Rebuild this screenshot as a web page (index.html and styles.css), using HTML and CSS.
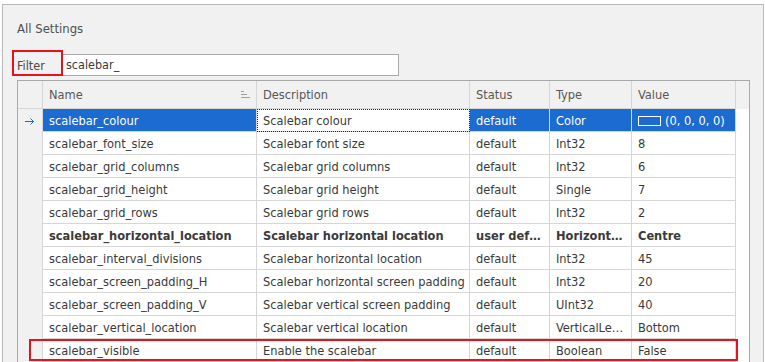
FILE: index.html
```html
<!DOCTYPE html>
<html lang="en-US">
<head>
<meta charset="UTF-8" />
<title>All Settings</title>
<link rel="stylesheet" href="styles.css">
</head>
<body>
    <div class="panel">
        <div class="title">All Settings</div>
        <div class="filter">
            <label class="filter-label">Filter</label>
            <div class="filter-input">scalebar_</div>
            <span class="mark mark--filter"></span>
        </div>
        <div class="grid">
            <div class="row row--head">
                <div class="cell cell--ind"></div>
                <div class="cell">Name
                    <svg class="sort" width="9" height="7" viewBox="0 0 9 7">
                        <rect x="0" y="0" width="3" height="1" fill="#a0a0a0"></rect>
                        <rect x="0" y="3" width="6" height="1" fill="#a0a0a0"></rect>
                        <rect x="0" y="6" width="9" height="1" fill="#a0a0a0"></rect>
                    </svg>
                </div>
                <div class="cell">Description</div>
                <div class="cell">Status</div>
                <div class="cell">Type</div>
                <div class="cell">Value</div>
                <div class="cell cell--fill"></div>
            </div>

            <div class="row row--selected">
                <div class="cell cell--ind">
                    <svg width="10" height="8" viewBox="0 0 10 8">
                        <path d="M0 4.5H8.5M5.5 1.5L8.5 4.5L5.5 7.5" fill="none" stroke="#1c6bd0" stroke-width="1"></path>
                    </svg>
                </div>
                <div class="cell">scalebar_colour</div>
                <div class="cell cell--focus">Scalebar colour</div>
                <div class="cell">default</div>
                <div class="cell">Color</div>
                <div class="cell"><span class="swatch"></span>(0, 0, 0, 0)</div>
                <div class="cell cell--fill"></div>
            </div>
            <div class="row">
                <div class="cell cell--ind"></div>
                <div class="cell">scalebar_font_size</div>
                <div class="cell">Scalebar font size</div>
                <div class="cell">default</div>
                <div class="cell">Int32</div>
                <div class="cell">8</div>
                <div class="cell cell--fill"></div>
            </div>
            <div class="row">
                <div class="cell cell--ind"></div>
                <div class="cell">scalebar_grid_columns</div>
                <div class="cell">Scalebar grid columns</div>
                <div class="cell">default</div>
                <div class="cell">Int32</div>
                <div class="cell">6</div>
                <div class="cell cell--fill"></div>
            </div>
            <div class="row">
                <div class="cell cell--ind"></div>
                <div class="cell">scalebar_grid_height</div>
                <div class="cell">Scalebar grid height</div>
                <div class="cell">default</div>
                <div class="cell">Single</div>
                <div class="cell">7</div>
                <div class="cell cell--fill"></div>
            </div>
            <div class="row">
                <div class="cell cell--ind"></div>
                <div class="cell">scalebar_grid_rows</div>
                <div class="cell">Scalebar grid rows</div>
                <div class="cell">default</div>
                <div class="cell">Int32</div>
                <div class="cell">2</div>
                <div class="cell cell--fill"></div>
            </div>
            <div class="row row--changed">
                <div class="cell cell--ind"></div>
                <div class="cell">scalebar_horizontal_location</div>
                <div class="cell">Scalebar horizontal location</div>
                <div class="cell">user def…</div>
                <div class="cell">Horizont…</div>
                <div class="cell">Centre</div>
                <div class="cell cell--fill"></div>
            </div>
            <div class="row">
                <div class="cell cell--ind"></div>
                <div class="cell">scalebar_interval_divisions</div>
                <div class="cell">Scalebar horizontal location</div>
                <div class="cell">default</div>
                <div class="cell">Int32</div>
                <div class="cell">45</div>
                <div class="cell cell--fill"></div>
            </div>
            <div class="row">
                <div class="cell cell--ind"></div>
                <div class="cell">scalebar_screen_padding_H</div>
                <div class="cell">Scalebar horizontal screen padding</div>
                <div class="cell">default</div>
                <div class="cell">Int32</div>
                <div class="cell">20</div>
                <div class="cell cell--fill"></div>
            </div>
            <div class="row">
                <div class="cell cell--ind"></div>
                <div class="cell">scalebar_screen_padding_V</div>
                <div class="cell">Scalebar vertical screen padding</div>
                <div class="cell">default</div>
                <div class="cell">UInt32</div>
                <div class="cell">40</div>
                <div class="cell cell--fill"></div>
            </div>
            <div class="row">
                <div class="cell cell--ind"></div>
                <div class="cell">scalebar_vertical_location</div>
                <div class="cell">Scalebar vertical location</div>
                <div class="cell">default</div>
                <div class="cell">VerticalLe…</div>
                <div class="cell">Bottom</div>
                <div class="cell cell--fill"></div>
            </div>
            <div class="row">
                <div class="cell cell--ind"></div>
                <div class="cell">scalebar_visible</div>
                <div class="cell">Enable the scalebar</div>
                <div class="cell">default</div>
                <div class="cell">Boolean</div>
                <div class="cell">False</div>
                <div class="cell cell--fill"></div>
                <span class="mark mark--row"></span>
            </div>
        </div>
    </div>
</body>
</html>
```

FILE: styles.css
```css
*{
    box-sizing: border-box;
}
html, body{
    height: 100%;
}
body{
    margin: 0;
    background-color: white;
    overflow: hidden;
    font-family: "DejaVu Sans Condensed", "DejaVu Sans", sans-serif;
    font-stretch: condensed;
    color: #3a3a3a;
}
.panel{
    margin: 4px 0 0 2px;
    width: 762px;
    height: calc(100% - 4px);
    border: 1px solid #b9b9b9;
    border-bottom: none;
    background-color: #f1f1f1;
    padding: 16px 0 0 14px;
    overflow: hidden;
}
.title{
    font-size: 13px;
    line-height: 16px;
    color: #4f4f4f;
}
.filter{
    position: relative;
    display: flex;
    align-items: center;
    margin-top: 17px;
    height: 22px;
    font-size: 12.5px;
}
.filter-label{
    width: 44px;
    color: #4a4a4a;
}
.filter-input{
    width: 338px;
    height: 22px;
    line-height: 20px;
    border: 1px solid #ababab;
    background-color: white;
    padding-left: 4px;
}
.mark{
    position: absolute;
    border: 2px solid #e8121a;
}
.mark--filter{
    left: -5px;
    top: -4px;
    width: 51px;
    height: 26px;
}
.grid{
    margin-top: 4px;
    width: 733px;
    border: 1px solid #a8a8a8;
    background-color: white;
    font-size: 12.7px;
}
.row{
    position: relative;
    display: grid;
    grid-template-columns: 25px 214px 213px 80px 82px 104px 13px;
    height: 23px;
}
.cell{
    border-right: 1px solid #d6d6d6;
    border-bottom: 1px solid #d6d6d6;
    padding: 1px 0 0 6px;
    line-height: 21px;
    white-space: nowrap;
    overflow: hidden;
}
.cell--ind{
    background-color: #f1f1f1;
    border-bottom: none;
    padding: 0 0 0 7px;
    display: flex;
    align-items: center;
}
.cell--fill{
    border: none;
}
.row--head{
    height: 28px;
    background-color: #f1f1f1;
    color: #575757;
}
.row--head .cell{
    position: relative;
    line-height: 26px;
}
.row--head .cell--ind{
    border-bottom: 1px solid #d6d6d6;
}
.sort{
    position: absolute;
    right: 6px;
    top: 10px;
}
.row--selected .cell{
    background-color: #1c6bd0;
    color: white;
}
.row--selected .cell--fill{
    background-color: transparent;
}
.row--selected .cell--ind{
    background-color: #f1f1f1;
}
.row--selected .cell--focus{
    background-color: white;
    color: #3a3a3a;
    outline: 1px dotted #222;
    outline-offset: -1px;
}
.swatch{
    display: inline-block;
    width: 23px;
    height: 10px;
    border: 1px solid white;
    margin: 0 4px 0 0;
    vertical-align: -1px;
}
.row--changed{
    font-weight: bold;
}
.mark--row{
    left: 11px;
    top: 0;
    width: 709px;
    height: 22px;
}
```
